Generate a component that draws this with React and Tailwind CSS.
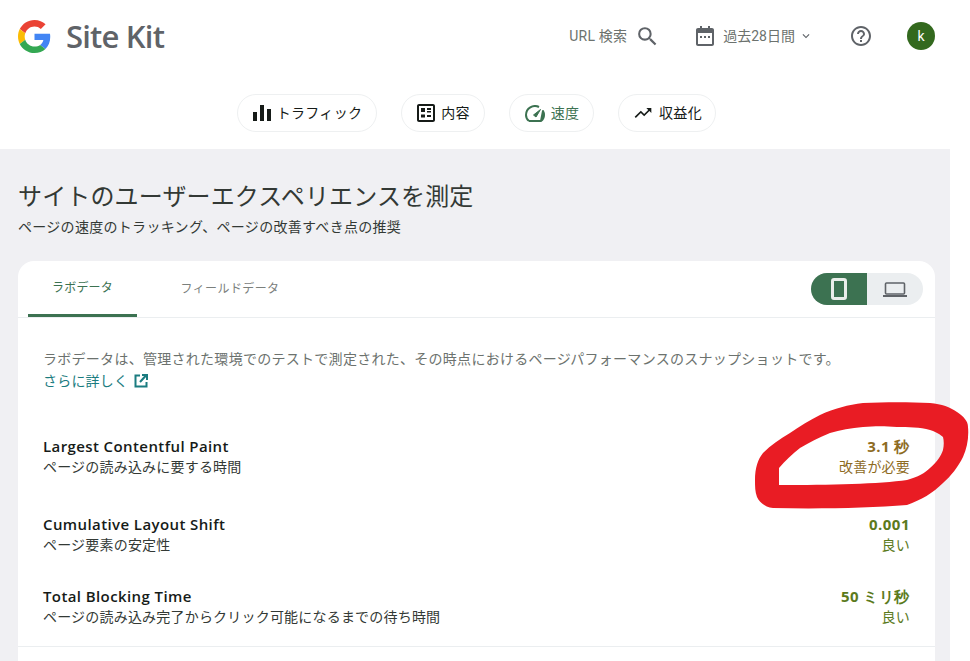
import { MdSearch, MdHelpOutline, MdTrendingUp, MdKeyboardArrowDown } from 'react-icons/md';

const font = 'font-["Roboto","Noto_Sans_CJK_JP",sans-serif]';

function GoogleG() {
  return (
    <svg width="33" height="33" viewBox="0 0 48 48">
      <path fill="#EA4335" d="M24 9.5c3.5 0 6.7 1.2 9.2 3.6l6.9-6.9C35.9 2.4 30.5 0 24 0 14.6 0 6.5 5.4 2.6 13.2l8 6.2C12.4 13.7 17.700 9.5 24 9.500z" />
      <path fill="#4285F4" d="M46.900 24.500c0-1.600-.1-3.100-.4-4.500H24v9h12.900c-.6 3-2.200 5.500-4.700 7.200l7.700 6c4.500-4.200 7-10.300 7-17.700z" />
      <path fill="#FBBC05" d="M10.500 28.600c-.5-1.400-.8-3-.8-4.600s.3-3.200.8-4.600l-8-6.200C.9 16.500 0 20.100 0 24s.9 7.500 2.600 10.800l7.900-6.200z" />
      <path fill="#34A853" d="M24 48c6.500 0 11.900-2.100 15.900-5.800l-7.700-6c-2.100 1.400-4.900 2.300-8.200 2.300-6.300 0-11.600-4.200-13.500-9.900l-8 6.200C6.500 42.600 14.600 48 24 48z" />
    </svg>
  );
}

function CalendarIcon() {
  return (
    <svg width="18" height="20" viewBox="0 0 18 20" fill="#5f6368">
      <path d="M4 0h2v2h6V0h2v2h2c1.100 0 2 .9 2 2v14c0 1.100-.9 2-2 2H2c-1.100 0-2-.9-2-2V4c0-1.100.9-2 2-2h2V0zM2 7v11h14V7H2z" />
      <rect x="4" y="10" width="2" height="2" />
      <rect x="8" y="10" width="2" height="2" />
      <rect x="12" y="10" width="2" height="2" />
    </svg>
  );
}

function BarsIcon() {
  return (
    <svg width="18" height="16" viewBox="0 0 18 16" fill="#161b18">
      <rect x="0" y="7" width="4" height="9" />
      <rect x="7" y="0" width="4" height="16" />
      <rect x="14" y="4" width="4" height="12" />
    </svg>
  );
}

function ContentIcon() {
  return (
    <svg width="18" height="18" viewBox="0 0 18 18" fill="#161b18">
      <path d="M2 0h14c1.100 0 2 .9 2 2v14c0 1.100-.9 2-2 2H2c-1.100 0-2-.9-2-2V2C0 .9.9 0 2 0zm0 2v14h14V2H2z" />
      <rect x="4" y="4" width="4" height="4" />
      <rect x="10" y="4" width="4" height="2" />
      <rect x="10" y="7" width="4" height="1.500" />
      <rect x="4" y="10.500" width="4" height="3" />
      <rect x="10" y="11" width="4" height="2" />
    </svg>
  );
}

function SpeedIcon() {
  return (
    <svg width="20" height="17" viewBox="0 0 20 17" fill="none" stroke="#3c7251" strokeWidth="2">
      <path d="M4 16C2 14.500 1 12.500 1 10a9 9 0 0 1 13-8" />
      <path d="M18 6c.7 1.200 1 2.600 1 4 0 2.500-1 4.500-3 6z" strokeLinejoin="round" />
      <path d="M4 16h12" />
      <path d="M15.500 4.500L11 12l-2.500-2z" fill="#3c7251" strokeWidth="1" />
    </svg>
  );
}

function PhoneIcon() {
  return (
    <svg width="16" height="22" viewBox="0 0 16 22" fill="none" stroke="#e9eeea" strokeWidth="3">
      <rect x="1.500" y="1.500" width="13" height="19" rx="1.500" />
    </svg>
  );
}

function LaptopIcon() {
  return (
    <svg width="24" height="15" viewBox="0 0 24 15" fill="none" stroke="#5f6368">
      <rect x="2.500" y="1" width="19" height="11" rx="1" strokeWidth="1.600" />
      <path d="M0 14h24" strokeWidth="1.800" />
    </svg>
  );
}

function ExternalIcon() {
  return (
    <svg width="14" height="14" viewBox="0 0 14 14" fill="none" stroke="#1b7c80" strokeWidth="2">
      <path d="M6 1.500H1.500v11h11V8" />
      <path d="M6 8l6-6.500M8 1h5v5" />
    </svg>
  );
}

function Pill({ icon, label, active, className }) {
  return (
    <div className={`flex h-[38px] items-center justify-center gap-[6px] rounded-full border border-[#eef0f1] pl-[1px] text-[14px] tracking-[0.3px] ${active ? 'text-[#3c7251]' : 'text-[#161b18]'} ${className}`}>
      {icon}
      <span>{label}</span>
    </div>
  );
}

function Metric({ title, desc, value, status, color, className }) {
  return (
    <div className={`flex items-start justify-between ${className}`}>
      <div>
        <div className="font-['Open_Sans'] text-[15px] leading-[18px] font-semibold tracking-[0.4px] text-[#161b18]">{title}</div>
        <div className="mt-[2px] text-[14px] leading-[20px] tracking-[0.2px] text-[#333935]">{desc}</div>
      </div>
      <div className={`text-right ${color}`}>
        <div className="font-['Open_Sans'] text-[15px] leading-[18px] font-bold tracking-[0.5px]">{value}</div>
        <div className="mt-[2px] text-[14px] leading-[20px] tracking-[0.2px]">{status}</div>
      </div>
    </div>
  );
}

export default function App() {
  return (
    <div className={`relative h-[661px] w-[970px] overflow-hidden bg-white ${font}`}>
      <header className="flex h-[72px] items-center pl-[18px]">
        <GoogleG />
        <span className="ml-[15px] font-['Open_Sans'] text-[31px] leading-none font-semibold tracking-[-0.8px] text-[#5f6368]">Site Kit</span>
        <div className="ml-auto flex items-center pr-[35px]">
          <span className="text-[14px] tracking-[0.2px] text-[#6c726e]">URL 検索</span>
          <MdSearch className="ml-[8px] text-[25px] text-[#5f6368]" />
          <div className="ml-[36px]"><CalendarIcon /></div>
          <span className="ml-[9px] text-[14px] text-[#6c726e]">過去28日間</span>
          <MdKeyboardArrowDown className="ml-[4px] text-[14px] text-[#5f6368]" />
          <MdHelpOutline className="ml-[36px] text-[24px] text-[#5f6368]" />
          <div className="ml-[34px] flex h-[28px] w-[28px] items-center justify-center rounded-full bg-[#33691e] text-[14px] text-white">k</div>
        </div>
      </header>

      <nav className="flex h-[77px] justify-start gap-[24px] pt-[22px] pl-[237px]">
        <Pill className="w-[140px]" icon={<BarsIcon />} label="トラフィック" />
        <Pill className="w-[84px]" icon={<ContentIcon />} label="内容" />
        <Pill className="w-[85px]" active icon={<SpeedIcon />} label="速度" />
        <Pill className="w-[98px]" icon={<MdTrendingUp className="text-[20px]" />} label="収益化" />
      </nav>

      <main className="h-[512px] w-[950px] bg-[#f0f0f3] pt-[33px] pl-[18px]">
        <h1 className="text-[24px] leading-[30px] tracking-[0.15px] text-[#333935]">サイトのユーザーエクスペリエンスを測定</h1>
        <p className="mt-[5px] text-[14px] leading-[20px] tracking-[0.3px] text-[#333935]">ページの速度のトラッキング、ページの改善すべき点の推奨</p>

        <section className="mt-[24px] h-[400px] w-[917px] rounded-t-[16px] bg-white">
          <div className="flex h-[57px] items-start justify-between border-b border-[#ebeef0] pr-[12px]">
            <div className="flex pl-[10px] text-[12px]">
              <div className="flex h-[56px] w-[109px] items-center justify-center border-b-[3px] border-[#3c7251] tracking-[0.2px] text-[#3c7251]">ラボデータ</div>
              <div className="ml-[22px] flex h-[56px] w-[142px] items-center justify-center tracking-[0.4px] text-[#7b807d]">フィールドデータ</div>
            </div>
            <div className="mt-[12px] flex h-[32px] w-[112px] overflow-hidden rounded-full bg-[#ebeef0]">
              <div className="flex w-[56px] items-center justify-center bg-[#3c7251]"><PhoneIcon /></div>
              <div className="flex w-[56px] items-center justify-center"><LaptopIcon /></div>
            </div>
          </div>

          <div className="px-[25px] pt-[30px]">
            <p className="text-[14px] leading-[22px] tracking-[0.28px] text-[#6c726e]">ラボデータは、管理された環境でのテストで測定された、その時点におけるページパフォーマンスのスナップショットです。</p>
            <a className="flex items-center gap-[6px] text-[14px] leading-[22px] tracking-[0.2px] text-[#1b7c80]">さらに詳しく <ExternalIcon /></a>

            <Metric className="mt-[45px]" title="Largest Contentful Paint" desc="ページの読み込みに要する時間" value="3.1 秒" status="改善が必要" color="text-[#8e6b1f]" />
            <Metric className="mt-[38px]" title="Cumulative Layout Shift" desc="ページ要素の安定性" value="0.001" status="良い" color="text-[#5b7a1c]" />
            <Metric className="mt-[32px]" title="Total Blocking Time" desc="ページの読み込み完了からクリック可能になるまでの待ち時間" value="50 ミリ秒" status="良い" color="text-[#5b7a1c]" />
          </div>
          <div className="mt-[19px] border-t border-[#ebeef0]" />
        </section>
      </main>

      {/* hand-drawn red marker over the page */}
      <svg className="absolute top-0 left-0" width="970" height="661" viewBox="0 0 970 661">
        <path
          fill="#e91c24"
          fillRule="evenodd"
          d="M755 480C755 468 758 459 763 453C771 445 780 439 790 433C800 426 810 420 820 415C835 408 848 405 863 403C885 402 910 402 930 403C942 404 950 407 957 412C964 417 968 421 968 427C969 438 967 448 963 457C958 467 951 476 943 483C933 493 921 500 907 505C870 508 820 509 773 508C765 507 760 503 757 497C755 492 755 486 755 480ZM779 485C830 485 880 484 907 480C918 477 925 473 930 468C937 462 941 456 943 450C944 445 944 441 943 437C938 433 934 431 930 430C920 427 908 427 897 427C885 426 875 426 863 427C851 428 840 430 830 433C820 437 810 442 800 448C792 454 785 461 779 468Z"
        />
      </svg>
    </div>
  );
}
